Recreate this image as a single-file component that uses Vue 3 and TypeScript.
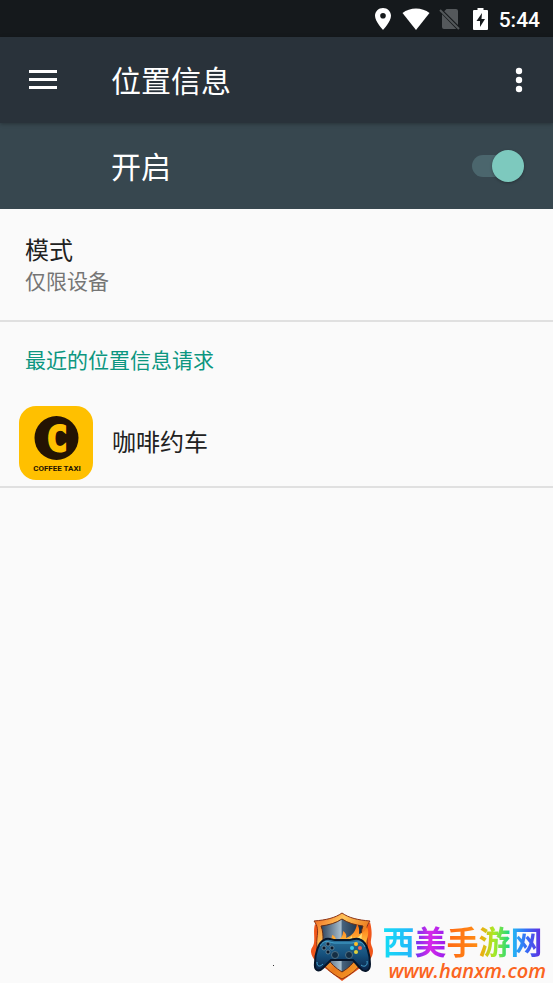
<script setup lang="ts">
import { ref } from 'vue'

interface LocationRequest {
  id: number
  name: string
}

const enabled = ref(true)
const mode = ref('仅限设备')
const requests = ref<LocationRequest[]>([{ id: 1, name: '咖啡约车' }])
</script>

<template>
  <div class="screen">
    <div class="status-bar">
      <svg class="pin" width="16" height="22" viewBox="0 0 16 22" aria-hidden="true">
        <path fill="#fff" fill-rule="evenodd" d="M8 0C3.500 0 0 3.400 0 7.800 0 13.500 8 22 8 22s8-8.500 8-14.200C16 3.400 12.500 0 8 0Zm0 5a2.800 2.800 0 1 1 0 5.600A2.800 2.800 0 0 1 8 5Z" />
      </svg>
      <svg class="wifi" width="28" height="22" viewBox="0 0 28 22" aria-hidden="true">
        <path fill="#fff" d="M14 22 .5 5C4.200 2 9 .5 14 .5S23.800 2 27.500 5Z" />
      </svg>
      <svg class="sim" width="21" height="22" viewBox="0 0 21 22" aria-hidden="true">
        <path fill="#54585b" d="M7.500 1H17q2 0 2 2v14L5.200 3.300ZM3 6.200 17.300 21H5q-2 0-2-2Z" />
        <path fill="none" stroke="#54585b" stroke-width="2" d="m1 2 19 19" />
      </svg>
      <svg class="battery" width="15" height="22" viewBox="0 0 15 22" aria-hidden="true">
        <path fill="#fff" fill-rule="evenodd" d="M4.500 0h6v2H14q1 0 1 1v18q0 1-1 1H1q-1 0-1-1V3q0-1 1-1h3.500ZM9 5l-5.500 8H7v6l5-8H8.500Z" />
      </svg>
      <time class="clock">5:44</time>
    </div>

    <header class="toolbar">
      <button class="icon-button" type="button" aria-label="菜单">
        <svg width="28" height="20" viewBox="0 0 28 20" aria-hidden="true">
          <path fill="#fff" d="M0 0h28v3H0zM0 8h28v3H0zM0 16h28v3H0z" />
        </svg>
      </button>
      <h1 class="title">位置信息</h1>
      <button class="icon-button more" type="button" aria-label="更多">
        <svg width="8" height="26" viewBox="0 0 8 26" fill="#fff" aria-hidden="true">
          <circle cx="4" cy="4" r="3.200" />
          <circle cx="4" cy="13" r="3.200" />
          <circle cx="4" cy="22" r="3.200" />
        </svg>
      </button>
    </header>

    <div class="master">
      <label class="master-label" for="location-switch">{{ enabled ? '开启' : '关闭' }}</label>
      <input id="location-switch" v-model="enabled" class="switch" type="checkbox" role="switch" />
    </div>

    <main class="content">
      <button class="mode" type="button">
        <span class="item-title">模式</span>
        <span class="item-summary">{{ mode }}</span>
      </button>

      <section class="recent">
        <h2 class="section-title">最近的位置信息请求</h2>
        <ul class="list">
          <li v-for="item in requests" :key="item.id">
            <button class="app-row" type="button">
              <svg class="app-icon" width="74" height="74" viewBox="0 0 74 74" aria-hidden="true">
                <rect width="74" height="74" rx="17" fill="#ffc000" />
                <circle cx="37.500" cy="32" r="22" fill="#241303" />
                <text class="mark" x="38" y="45" text-anchor="middle">C</text>
                <text class="mark-name" x="38" y="65" text-anchor="middle">COFFEE TAXI</text>
              </svg>
              <span class="item-title">{{ item.name }}</span>
            </button>
          </li>
        </ul>
      </section>
    </main>

    <footer class="footer">
      <span class="speck"></span>
      <svg class="emblem" width="62" height="70" viewBox="0 0 62 70" aria-hidden="true">
        <defs>
          <linearGradient id="gold" x1="0" y1="0" x2="1" y2="1">
            <stop offset="0" stop-color="#f05a14" />
            <stop offset=".3" stop-color="#ffc45a" />
            <stop offset=".6" stop-color="#e9781c" />
            <stop offset="1" stop-color="#ffae2e" />
          </linearGradient>
          <linearGradient id="steel" x1="0" y1="0" x2="1" y2="0">
            <stop offset="0" stop-color="#2c435d" />
            <stop offset=".48" stop-color="#a9bfce" />
            <stop offset=".5" stop-color="#48647e" />
            <stop offset="1" stop-color="#14273b" />
          </linearGradient>
          <linearGradient id="pad" x1="0" y1="0" x2="0" y2="1">
            <stop offset="0" stop-color="#2b7199" />
            <stop offset=".5" stop-color="#15507c" />
            <stop offset="1" stop-color="#0a2146" />
          </linearGradient>
          <linearGradient id="fire" x1="0" y1="0" x2="0" y2="1">
            <stop offset="0" stop-color="#ff6a0e" />
            <stop offset="1" stop-color="#ffd04a" />
          </linearGradient>
        </defs>
        <path fill="#f0561a" d="M4 12C2 19 4 25 3 31c-1 5-3 4-3 9 1 7 6 10 10 13l21 16 21-15c5-4 10-8 10-15 0-4-3-6-2-11 1-5 1-10-1-18l-5 5H8Z" />
        <path fill="url(#gold)" stroke="#8a3216" d="M31 1c7 5 16 7 28 8-4 5-4 10-3 17 2 19-7 32-25 41C13 58 4 45 6 26c1-7 1-12-3-17 12-1 21-3 28-8Z" />
        <path fill="url(#steel)" stroke="#612b17" d="M31 7c6 4 13 6 21 7-2 5-2 9-2 15 0 13-6 23-19 31-13-8-19-18-19-31 0-6 0-10-2-15 8-1 15-3 21-7Z" />
        <path fill="url(#fire)" d="M18 32c0-4 3-4 3-9 4 1 3 4 5 5 4-1 6-4 6-9 3 2 4 4 3 7 6-2 10-7 11-14 3 4 2 8 2 10 4-1 7-4 8-8 3 8 0 15-4 20H18Z" />
        <path fill="#ffe278" d="M27 31c6 0 10-3 14-7v4c5-1 8-4 10-7l-1 11H27Z" />
        <path fill="url(#pad)" stroke="#06152a" stroke-width="2" d="M13 28c4-3 8 0 11 0h14c4 0 7-3 12 0 6 3 9 15 9 24 0 8-6 9-10 4l-7-8H20l-8 8c-5 5-9 2-8-5 0-9 3-20 9-23Z" />
        <path fill="none" stroke="#45a4cf" stroke-width="1" d="M9 34c4-7 8-4 14-3h18c6-1 10-3 13 4M6 50c0 5 3 5 6 2M50 53c4 3 7 0 6-4" />
        <g fill="#0b182a" stroke="#7597a8" stroke-width=".7">
          <circle cx="17" cy="32" r="2" />
          <circle cx="21" cy="36" r="2" />
          <circle cx="13" cy="36" r="2" />
          <circle cx="17" cy="40" r="2" />
        </g>
        <circle cx="24" cy="43" r="3.500" fill="#142e44" stroke="#4f7185" />
        <circle cx="38" cy="43" r="3.500" fill="#142e44" stroke="#4f7185" />
        <circle cx="45" cy="32" r="2" fill="#ffbf24" />
        <circle cx="41" cy="36" r="2" fill="#37cbea" />
        <circle cx="49" cy="36" r="2" fill="#fb6247" />
        <circle cx="45" cy="40" r="2" fill="#dfd03d" />
      </svg>
      <div class="brand">
        <div class="brand-name">西美手游网</div>
        <div class="brand-url">www.hanxm.com</div>
      </div>
    </footer>
  </div>
</template>

<style>
body {
  margin: 0;
  background: #fafafa;
}
</style>

<style scoped>
.screen {
  display: flex;
  flex-direction: column;
  min-height: 100vh;
  background: #fafafa;
  color: #212121;
  font-family: Roboto, "Noto Sans CJK SC", sans-serif;
}

button {
  margin: 0;
  padding: 0;
  border: 0;
  background: none;
  color: inherit;
  font: inherit;
  text-align: left;
  cursor: pointer;
}

svg {
  display: block;
  flex: none;
}

.status-bar {
  display: flex;
  align-items: center;
  justify-content: flex-end;
  box-sizing: border-box;
  height: 37px;
  padding-right: 13px;
  background: #15191c;
}

.wifi {
  margin-left: 11px;
}

.sim {
  margin-left: 9px;
}

.battery {
  margin-left: 13px;
}

.clock {
  margin-left: 11px;
  padding-top: 2px;
  color: #fff;
  font-size: 21px;
  font-weight: 500;
  line-height: 24px;
}

.toolbar {
  display: flex;
  position: relative;
  align-items: center;
  height: 86px;
  padding: 0 29px;
  background: #29323a;
  box-shadow: 0 1px 4px rgba(0, 0, 0, 0.3);
  color: #fff;
}

.icon-button {
  width: 28px;
}

.title {
  flex: 1;
  margin: 0 0 0 54px;
  padding-top: 4px;
  font-size: 30px;
  font-weight: 400;
  line-height: 40px;
}

.more {
  display: flex;
  justify-content: flex-end;
  margin-right: 1px;
}

.master {
  display: flex;
  align-items: center;
  justify-content: space-between;
  height: 86px;
  padding: 0 29px 0 111px;
  background: #37474f;
  color: #fff;
}

.master-label {
  flex: 1;
  padding-top: 4px;
  font-size: 30px;
  line-height: 40px;
}

.switch {
  display: flex;
  align-items: center;
  width: 52px;
  height: 32px;
  margin: 0;
  appearance: none;
  cursor: pointer;
}

.switch::before {
  width: 46px;
  height: 22px;
  border-radius: 11px;
  background: #4b666d;
  content: "";
}

.switch::after {
  width: 32px;
  height: 32px;
  margin-left: -46px;
  border-radius: 50%;
  background: #b9c5c9;
  box-shadow: 0 1px 3px rgba(0, 0, 0, 0.3);
  content: "";
}

.switch:checked::after {
  margin-left: -26px;
  background: #7dc9be;
}

.mode {
  display: flex;
  flex-direction: column;
  box-sizing: border-box;
  width: 100%;
  padding: 26px 25px 23px;
  border-bottom: 2px solid #e0e0e0;
}

.item-title {
  font-size: 24px;
  line-height: 32px;
}

.item-summary {
  color: #757575;
  font-size: 21px;
  line-height: 30px;
}

.section-title {
  margin: 0;
  padding: 24px 25px;
  color: #0c9680;
  font-size: 21px;
  font-weight: 400;
  line-height: 30px;
}

.list {
  margin: 0;
  padding: 0;
  list-style: none;
}

.app-row {
  display: flex;
  align-items: center;
  gap: 19px;
  box-sizing: border-box;
  width: 100%;
  padding: 6px 19px;
  border-bottom: 2px solid #e0e0e0;
}

.mark {
  fill: #ffc000;
  stroke: #ffc000;
  stroke-width: 2px;
  font: 700 35px "DejaVu Sans Mono", monospace;
}

.mark-name {
  fill: #241303;
  font: 700 8px Roboto, sans-serif;
}

.footer {
  display: flex;
  align-items: flex-end;
  justify-content: flex-end;
  margin-top: auto;
  padding-right: 7px;
}

.speck {
  width: 1px;
  height: 1px;
  margin: 0 37px 17px 0;
  background: #333;
}

.emblem {
  margin-bottom: 1px;
}

.brand {
  margin-left: 9px;
}

.brand-name {
  width: 160px;
  background-image: linear-gradient(90deg, #13dff5 0, #24b5fa 19%, #6335f0 20%, #d927e8 30%, #9b20ee 39%, #ff6815 40%, #ff8a14 59%, #ff9d0a 60%, #a8ea26 70%, #25d97b 79%, #21c6f4 80%, #346ef6 90%, #6429df 100%);
  background-clip: text;
  color: transparent;
  font-family: "Noto Sans CJK SC", sans-serif;
  font-size: 32px;
  font-weight: 700;
  line-height: 38px;
}

.brand-url {
  padding-left: 6px;
  color: #fa6420;
  font-family: "Open Sans", sans-serif;
  font-size: 20px;
  font-style: italic;
  font-weight: 600;
  line-height: 24px;
}
</style>
